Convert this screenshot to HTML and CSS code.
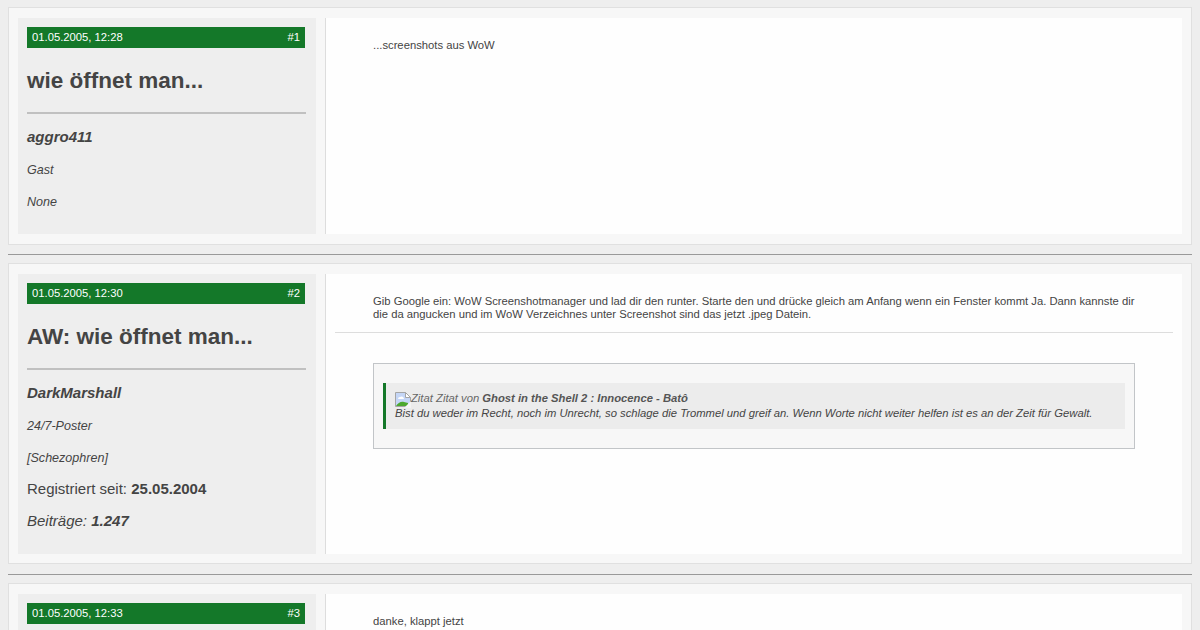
FILE: index.html
```html
<!DOCTYPE html>
<html lang="de">
<head>
  <meta charset="UTF-8">
  <title>wie öffnet man...</title>
  <link rel="stylesheet" href="styles.css">
</head>
<body>
  <div class="post first">
    <div class="userinfo">
      <div class="posthead"><span>01.05.2005, 12:28</span><span>#1</span></div>
      <h2>wie öffnet man...</h2>
      <hr>
      <p class="username">aggro411</p>
      <p class="rank">Gast</p>
      <p class="rank">None</p>
    </div>
    <div class="postbody">
      <div class="content">...screenshots aus WoW</div>
    </div>
  </div>
  <hr class="separator">

  <div class="post second">
    <div class="userinfo">
      <div class="posthead"><span>01.05.2005, 12:30</span><span>#2</span></div>
      <h2>AW: wie öffnet man...</h2>
      <hr>
      <p class="username">DarkMarshall</p>
      <p class="rank">24/7-Poster</p>
      <p class="rank">[Schezophren]</p>
      <p class="stat">Registriert seit: <b>25.05.2004</b></p>
      <p class="stat"><i>Beiträge: <b>1.247</b></i></p>
    </div>
    <div class="postbody">
      <div class="content">Gib Google ein: WoW Screenshotmanager und lad dir den runter. Starte den und drücke gleich am Anfang wenn ein Fenster kommt Ja. Dann kannste dir<br>die da angucken und im WoW Verzeichnes unter Screenshot sind das jetzt .jpeg Datein.</div>
      <!-- Signature -->
      <div class="signature">
        <div class="sigbox">
          <blockquote>
            <div class="quoteby">
              <svg class="quoteicon" width="16" height="16" viewBox="0 0 16 16">
                <path d="M.5.5h10l5 5v9H.5z" fill="#c5d6f6" stroke="#a5a5a5"/>
                <path d="M3 7a2 2 0 0 1 2-2 2.500 2.500 0 0 1 4 2z" fill="#fff"/>
                <path d="M1 14c2-3 5-5 8-4l4 1v3z" fill="#4ca82e"/>
                <path d="M10.500.5v5h5z" fill="#fff" stroke="#a5a5a5"/>
                <path d="M9 16l7-7v7z" fill="#f4f4f4"/>
              </svg><span>Zitat Zitat von <b>Ghost in the Shell 2 : Innocence - Batô</b></span>
            </div>
            <div class="quotetext">Bist du weder im Recht, noch im Unrecht, so schlage die Trommel und greif an. Wenn Worte nicht weiter helfen ist es an der Zeit für Gewalt.</div>
          </blockquote>
        </div>
      </div>
    </div>
  </div>
  <hr class="separator">

  <div class="post last">
    <div class="userinfo">
      <div class="posthead"><span>01.05.2005, 12:33</span><span>#3</span></div>
    </div>
    <div class="postbody">
      <div class="content">danke, klappt jetzt</div>
    </div>
  </div>
</body>
</html>
```

FILE: styles.css
```css
body {
  display: flex;
  flex-direction: column;
  box-sizing: border-box;
  height: 630px;
  margin: 0;
  padding: 7px 8px 0;
  background: #eee;
  color: #444;
  font-family: "Liberation Sans", Arial, sans-serif;
}
.post {
  display: flex;
  flex: none;
  box-sizing: border-box;
  gap: 9px;
  padding: 10px 9px;
  border: 1px solid #e0e0e0;
  background: #f7f7f7;
}
.first {
  height: 238px;
}
.second {
  height: 301px;
  padding-bottom: 9px;
  margin-bottom: 1px;
}
/* Runs down to the bottom of the window */
.last {
  flex: 1;
  border-bottom: 0;
  padding-bottom: 0;
}
.separator {
  flex: none;
  width: 100%;
  height: 1px;
  margin: 9px 0 8px;
  border: 0;
  background: #999;
}
/* Left column */
.userinfo {
  box-sizing: border-box;
  width: 298px;
  flex: none;
  padding: 9px 10px 0 9px;
  background: #eee;
}
.posthead {
  display: flex;
  justify-content: space-between;
  height: 21px;
  margin-right: 1px;
  padding: 0 5px;
  background: #147829;
  color: #fff;
  font-size: 11.25px;
  line-height: 21px;
}
.userinfo h2 {
  margin: 19px 0 17px;
  font-size: 22.5px;
  line-height: 28px;
}
.userinfo hr {
  height: 2px;
  margin: 0;
  border: 0;
  background: #c0c0c0;
}
.userinfo p {
  margin: 0;
  height: 32px;
  line-height: 20px;
}
.userinfo .username {
  margin-top: 13px;
  height: 33px;
  font-size: 15px;
  font-weight: bold;
  font-style: italic;
}
.rank {
  font-size: 12.55px;
  font-style: italic;
}
.userinfo .stat {
  font-size: 15px;
  line-height: 18px;
}
/* Right column */
.postbody {
  flex: 1;
  padding: 0 9px;
  border-left: 1px solid #ddd;
  background: #fefefe;
}
.content {
  padding: 21px 38px 11px;
  font-size: 11.25px;
  line-height: 13px;
  white-space: nowrap;
}
.signature {
  padding: 30px 38px 0;
  border-top: 1px solid #ddd;
}
.sigbox {
  padding: 19px 9px;
  border: 1px solid #c2c5c8;
  background: #f7f7f7;
}
blockquote {
  height: 38px;
  margin: 0;
  padding: 8px 9px 0;
  border-left: 3px solid #147829;
  background: #ececec;
  font-size: 11.25px;
  font-style: italic;
}
.quoteby {
  display: flex;
  height: 15px;
  color: #666;
  line-height: 15px;
}
.quoteby b {
  color: #555;
}
.quoteicon {
  margin-top: 1px;
}
.quotetext {
  line-height: 15px;
}
```
